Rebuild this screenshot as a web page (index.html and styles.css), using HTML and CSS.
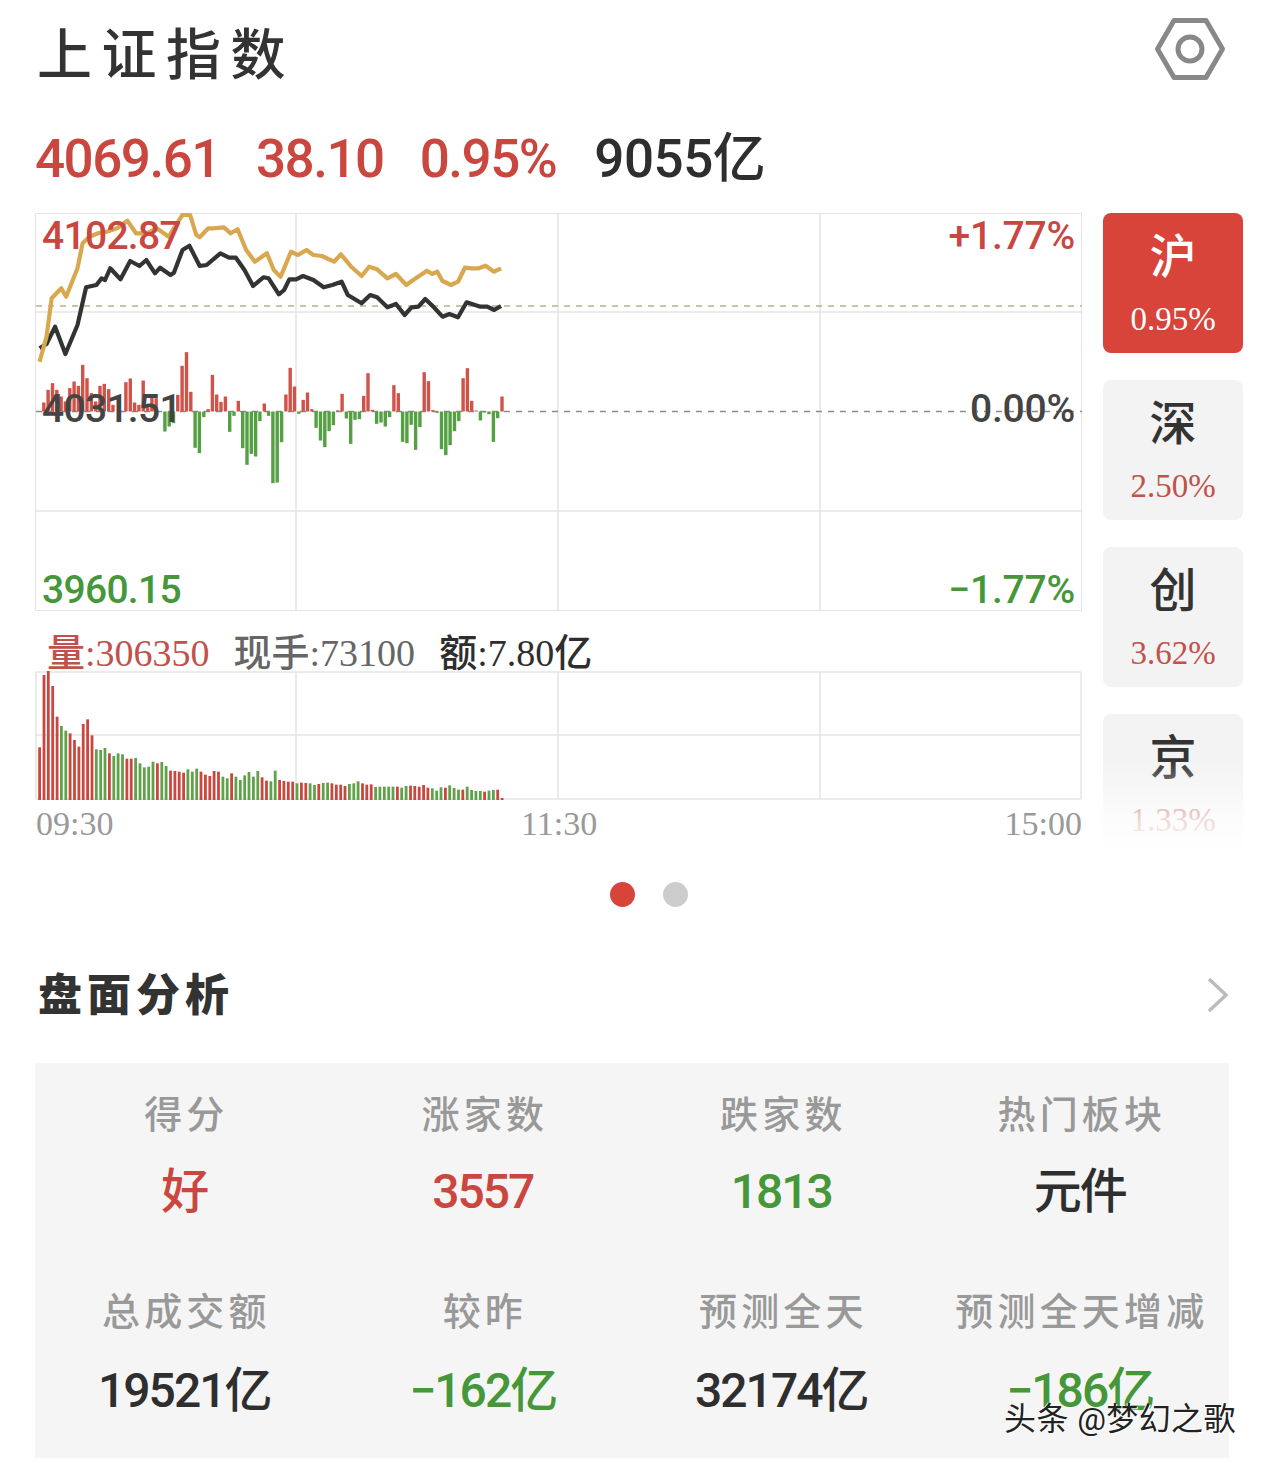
FILE: index.html
```html
<!DOCTYPE html>
<html lang="zh-CN">
<head>
  <meta charset="UTF-8" />
  <meta name="viewport" content="width=device-width, initial-scale=1" />
  <title>上证指数</title>
  <link rel="stylesheet" href="styles.css">
</head>
<body>
  <header class="head">
    <h1 class="title">上证指数</h1>
    <svg class="hex" width="76" height="68" viewBox="0 0 76 68">
      <path d="M22 6.5 H54 L70.5 35 L54 63.5 H22 L5.5 35 Z" fill="none" stroke="#888" stroke-width="5" stroke-linejoin="round" />
      <circle cx="38" cy="35" r="12" fill="none" stroke="#888" stroke-width="5" />
    </svg>
  </header>

  <div class="quote">
    <span class="up">4069.61</span>
    <span class="up">38.10</span>
    <span class="up">0.95%</span>
    <span class="dark">9055亿</span>
  </div>

  <div class="top">
    <div class="charts">
      <div class="price">
        <svg id="price-chart" width="1047" height="398"></svg>
        <span class="lab lab-l up" id="lab-high">4102.87</span>
        <span class="lab lab-l grey" id="lab-mid">4031.51</span>
        <span class="lab lab-l green" id="lab-low">3960.15</span>
        <span class="lab lab-r up" id="pct-high">+1.77%</span>
        <span class="lab lab-r grey" id="pct-mid">0.00%</span>
        <span class="lab lab-r green" id="pct-low">−1.77%</span>
      </div>
      <div class="meta">
        <span class="meta-red">量:306350</span>
        <span class="meta-grey">现手:73100</span>
        <span class="meta-dark">额:7.80亿</span>
      </div>
      <svg id="vol-chart" class="vol" width="1047" height="130"></svg>
      <div class="times">
        <span>09:30</span>
        <span class="t-mid">11:30</span>
        <span>15:00</span>
      </div>
    </div>

    <div class="side">
      <div class="tab active"><b>沪</b><span>0.95%</span></div>
      <div class="tab"><b>深</b><span>2.50%</span></div>
      <div class="tab"><b>创</b><span>3.62%</span></div>
      <div class="tab"><b>京</b><span>1.33%</span></div>
    </div>
  </div>

  <div class="dots"><i class="on"></i><i></i></div>

  <div class="sec-head">
    <h2>盘面分析</h2>
    <svg width="24" height="38" viewBox="0 0 24 38">
      <path d="M3 2 L20 18 L3 34" fill="none" stroke="#bbb" stroke-width="3.5" />
    </svg>
  </div>

  <div class="panel">
    <div class="cell"><label>得分</label><strong class="up">好</strong></div>
    <div class="cell"><label>涨家数</label><strong class="up">3557</strong></div>
    <div class="cell"><label>跌家数</label><strong class="green">1813</strong></div>
    <div class="cell"><label>热门板块</label><strong class="dark">元件</strong></div>
    <div class="cell"><label>总成交额</label><strong class="dark">19521亿</strong></div>
    <div class="cell"><label>较昨</label><strong class="green">−162亿</strong></div>
    <div class="cell"><label>预测全天</label><strong class="dark">32174亿</strong></div>
    <div class="cell"><label>预测全天增减</label><strong class="green">−186亿</strong></div>
  </div>

  <div class="mark">头条 @梦幻之歌</div>

  <script>
    const NS = "http://www.w3.org/2000/svg";
    const RED = "#c9473f";
    const GREEN = "#54a043";

    function add(svg, tag, attrs) {
      const el = document.createElementNS(NS, tag);
      for (const k in attrs) el.setAttribute(k, attrs[k]);
      svg.appendChild(el);
    }

    function gridLine(svg, x1, y1, x2, y2) {
      add(svg, "line", { x1, y1, x2, y2, stroke: "#e5e5e5", "stroke-width": 1.5 });
    }

    // traced from the picture at 2.904 / 3 scale
    const yellow = [115,485,135,410,150,295,178,265,192,290,225,205,240,130,260,110,285,100,310,95,340,85,370,62,395,100,425,100,455,85,490,110,520,60,530,45,552,45,570,105,580,112,605,85,620,85,650,82,670,100,690,88,715,150,740,185,775,160,795,210,815,230,845,155,865,165,890,150,910,165,935,168,970,185,990,163,1020,200,1050,228,1072,200,1095,208,1125,235,1150,222,1180,255,1200,240,1240,212,1255,222,1270,215,1285,243,1310,255,1330,245,1350,203,1370,205,1390,205,1410,197,1435,215,1455,205];
    const black = [115,445,135,432,160,380,190,462,225,375,250,262,280,255,295,235,305,240,320,205,350,238,378,183,405,198,425,180,450,220,465,203,495,225,505,218,530,150,550,137,580,198,600,195,640,160,665,173,685,173,710,210,735,258,765,232,780,235,810,283,825,270,840,238,860,238,880,228,910,240,940,262,965,255,992,245,1010,285,1050,310,1075,285,1095,292,1125,322,1150,312,1175,345,1195,322,1215,320,1235,297,1260,322,1285,350,1305,342,1330,352,1355,307,1395,320,1415,320,1435,330,1455,318];

    // up is positive, down is negative
    const flow = [0,27,65,85,65,45,30,70,90,77,140,100,55,30,77,83,67,20,0,0,88,99,27,20,93,23,45,40,0,-60,-45,-35,50,137,178,59,-109,-125,-17,7,110,51,29,45,-61,-13,32,-110,-160,-127,-135,-29,24,-13,-215,-213,-92,51,131,75,-7,35,57,7,-49,-87,-107,-59,-41,3,53,-21,-97,-25,-23,47,115,5,-37,-33,-45,-17,79,55,-91,-95,-40,-115,-47,118,91,4,-4,-113,-131,-101,-59,-29,100,130,32,3,-27,-3,-8,-91,-20,45];

    const vols = [382,165,152,198,290,318,332,340,360,380,312,298,346,388,390,384,400,408,400,403,416,416,414,430,442,440,425,430,426,438,452,453,455,458,448,455,446,455,464,468,453,455,470,475,460,470,480,466,456,470,453,472,482,484,452,480,483,485,485,490,488,489,490,495,492,489,488,490,494,494,498,492,490,484,490,494,493,501,500,500,500,500,500,503,498,497,498,500,495,503,505,512,502,503,496,504,509,509,500,510,513,513,515,512,510,509,534];
    const volUp = "rrrrrggrrrrrrgggrgggrrgggggrggrrrrgggrrrrrggrggggggrrggrrrrgrrggrggrrrrgggrrrgggggrggrrrrrgggrgggrggggrggr";

    function tracePoints(arr) {
      const pts = [];
      for (let i = 0; i < arr.length; i += 2) {
        pts.push((arr[i] / 2.904 - 35).toFixed(1) + "," + (arr[i + 1] / 3 - 13).toFixed(1));
      }
      return pts.join(" ");
    }

    function drawPrice() {
      const svg = document.getElementById("price-chart");
      gridLine(svg, 1, 99, 1046, 99);
      gridLine(svg, 1, 298, 1046, 298);
      [261, 523, 785].forEach(x => gridLine(svg, x, 1, x, 397));
      add(svg, "line", { x1: 1, y1: 93, x2: 1047, y2: 93, stroke: "#b8b08c", "stroke-width": 1.5, "stroke-dasharray": "6 6" });
      add(svg, "line", { x1: 1, y1: 198.5, x2: 1047, y2: 198.5, stroke: "#8c8c8c", "stroke-width": 1.5, "stroke-dasharray": "6 6" });

      flow.forEach((v, i) => {
        if (!v) return;
        const h = Math.abs(v) / 3;
        const x = 2.8 + i * (462.5 / 107);
        add(svg, "rect", { x: x.toFixed(1), y: v > 0 ? 198.5 - h : 198.5, width: 3.4, height: h, fill: v > 0 ? "#d0534a" : GREEN });
      });

      add(svg, "polyline", { points: tracePoints(black), fill: "none", stroke: "#333", "stroke-width": 4.2, "stroke-linejoin": "round" });
      add(svg, "polyline", { points: tracePoints(yellow), fill: "none", stroke: "#d9a74f", "stroke-width": 4.2, "stroke-linejoin": "round" });
    }

    function drawVol() {
      const svg = document.getElementById("vol-chart");
      gridLine(svg, 1, 1, 1046, 1);
      gridLine(svg, 1, 64, 1046, 64);
      gridLine(svg, 1, 128, 1046, 128);
      [1, 261, 523, 785, 1046].forEach(x => gridLine(svg, x, 1, x, 128));

      vols.forEach((top, i) => {
        const h = (540 - top) / 3;
        const x = 3.2 + i * (462.5 / (vols.length - 1));
        add(svg, "rect", { x: x.toFixed(1), y: 129 - h, width: 2.8, height: h, fill: volUp[i] === "g" ? "#5fa24a" : RED });
      });
    }

    drawPrice();
    drawVol();
  </script>
</body>
</html>
```

FILE: styles.css
```css
* {
  box-sizing: border-box;
}
body {
  margin: 0;
  padding-left: 35px;
  background: #fff;
  font-family: Roboto, "Noto Sans CJK SC", sans-serif;
  position: relative;
}
.up { color: #c9473f; }
.green { color: #45973a; }
.dark { color: #2e2e2e; }
.grey { color: #444; }

.head {
  height: 106px;
  width: 1194px;
  display: flex;
  justify-content: space-between;
  align-items: center;
}
.title {
  margin: 4px 0 0 2px;
  font-size: 55px;
  line-height: 106px;
  font-weight: 500;
  letter-spacing: 9.5px;
  color: #333;
}
.hex {
  margin: -10px 1px 0 0;
}

.quote {
  height: 107px;
  display: flex;
  align-items: baseline;
  gap: 36px;
  font-size: 53px;
  line-height: 107px;
  font-weight: 500;
  letter-spacing: -1.5px;
}
.quote .dark {
  margin-left: 2px;
  letter-spacing: -0.5px;
}

.top {
  display: flex;
  gap: 21px;
  width: 1208px;
  height: 641px;
}
.charts {
  width: 1047px;
}
.price {
  position: relative;
  height: 398px;
  border: 1.5px solid #e5e5e5;
}
.price svg {
  position: absolute;
  left: -1.5px;
  top: -1.5px;
}
.lab {
  position: absolute;
  font-size: 39px;
  line-height: 44px;
  font-weight: 500;
  letter-spacing: -0.7px;
}
.lab-l { left: 6px; }
.lab-r {
  right: 6px;
  letter-spacing: -0.2px;
}
#lab-high, #pct-high { top: 0; }
#lab-mid { top: 173px; }
#pct-mid { top: 173px; }
#lab-low, #pct-low { top: 354px; }

.meta {
  height: 60px;
  padding: 20px 0 0 12px;
  display: flex;
  gap: 24px;
  font-family: "Liberation Serif", "Noto Sans CJK SC", serif;
  font-size: 38px;
  font-weight: 500;
  line-height: 44px;
  white-space: nowrap;
}
.meta-red { color: #c0524b; }
.meta-grey { color: #666; }
.meta-dark { color: #2e2e2e; }

.vol {
  display: block;
}
.times {
  position: relative;
  padding-left: 1px;
  display: flex;
  justify-content: space-between;
  font-family: "Liberation Serif", serif;
  font-size: 34px;
  line-height: 46px;
  color: #999;
}
.t-mid {
  position: absolute;
  left: 486px;
}

.side {
  position: relative;
  width: 140px;
  display: flex;
  flex-direction: column;
  gap: 27px;
}
.side::after {
  content: "";
  position: absolute;
  left: 0;
  right: 0;
  bottom: 0;
  height: 94px;
  background: linear-gradient(rgba(255, 255, 255, 0), rgba(255, 255, 255, 0.78) 65%, #fff);
}
.tab {
  height: 140px;
  flex-shrink: 0;
  padding-top: 16px;
  border-radius: 8px;
  background: #f3f3f3;
  display: flex;
  flex-direction: column;
  align-items: center;
  color: #333;
}
.tab b {
  font-size: 47px;
  line-height: 56px;
  font-weight: 500;
}
.tab span {
  margin-top: 12px;
  font-family: "Liberation Serif", serif;
  font-size: 33px;
  line-height: 44px;
  color: #c0524b;
}
.tab.active {
  background: #d8433a;
  color: #fff;
}
.tab.active span {
  color: #fff;
}

.dots {
  width: 1194px;
  height: 25px;
  margin-top: 28px;
  padding-left: 575px;
  display: flex;
  gap: 28px;
}
.dots i {
  width: 25px;
  height: 25px;
  border-radius: 50%;
  background: #ccc;
}
.dots i.on {
  background: #d8433a;
}

.sec-head {
  width: 1194px;
  height: 58px;
  margin-top: 60px;
  display: flex;
  justify-content: space-between;
  align-items: center;
}
.sec-head h2 {
  margin: 0 0 0 3px;
  font-size: 44px;
  line-height: 58px;
  font-weight: 900;
  letter-spacing: 5px;
  color: #333;
}
.sec-head svg {
  margin-right: -1px;
}

.panel {
  width: 1194px;
  height: 395px;
  margin-top: 38px;
  background: #f5f5f5;
  display: grid;
  grid-template-columns: repeat(4, 1fr);
  grid-auto-rows: 197px;
}
.cell {
  padding-top: 30px;
  display: flex;
  flex-direction: column;
  align-items: center;
  gap: 25px;
}
.cell:nth-child(n+5) {
  gap: 27px;
}
.cell label {
  font-size: 38px;
  line-height: 44px;
  font-weight: 500;
  letter-spacing: 4.2px;
  color: #999;
  margin-right: -4.2px;
}
.cell strong {
  font-size: 48px;
  line-height: 60px;
  font-weight: 500;
  letter-spacing: -2px;
}

.mark {
  position: absolute;
  left: 1004px;
  top: 1398px;
  font-size: 32px;
  line-height: 42px;
  letter-spacing: 0.4px;
  color: #222;
  white-space: nowrap;
  text-shadow: 1px 1px 0 #fff, -1px 0 0 #fff;
}
```
